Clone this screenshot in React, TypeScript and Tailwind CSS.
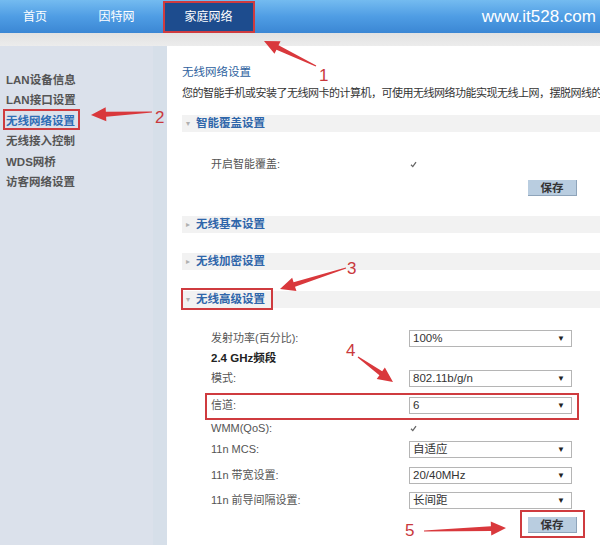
import React from "react";

const FONT = { fontFamily: '"Liberation Sans", "Noto Sans CJK SC", sans-serif' };

// red tapered arrow polygon, tail -> tip
function arrowPoints(x1: number, y1: number, x2: number, y2: number) {
  const dx = x2 - x1;
  const dy = y2 - y1;
  const len = Math.hypot(dx, dy);
  const ux = dx / len;
  const uy = dy / len;
  const nx = -uy;
  const ny = ux;
  const head = 15;
  const hw = 7;
  const bx = x2 - ux * head;
  const by = y2 - uy * head;
  const pts = [
    [x1 + nx * 0.6, y1 + ny * 0.6],
    [bx + nx * 2.4, by + ny * 2.4],
    [bx + nx * hw, by + ny * hw],
    [x2, y2],
    [bx - nx * hw, by - ny * hw],
    [bx - nx * 2.4, by - ny * 2.4],
    [x1 - nx * 0.6, y1 - ny * 0.6],
  ];
  return pts.map((p) => p.join(",")).join(" ");
}

const sideItems = ["LAN设备信息", "LAN接口设置", "无线网络设置", "无线接入控制", "WDS网桥", "访客网络设置"];

function SectionBar({ title, open }: { title: string; open?: boolean }) {
  return (
    <div className="flex h-[17px] items-center bg-[#f2f2f2] pl-[4px]">
      <span className="w-[10px] text-[8px] leading-none text-[#b0b0b0]">{open ? "▾" : "▸"}</span>
      <span className="text-[11.5px] font-bold leading-[17px] text-[#2f66aa]">{title}</span>
    </div>
  );
}

function Select({ value }: { value: string }) {
  return (
    <div className="flex h-[17px] w-[163px] items-center justify-between border border-[#b5b5b5] bg-white pl-[3px] pr-[6px]">
      <span className="text-[11.5px] leading-[15px] text-[#333]">{value}</span>
      <span className="text-[8px] leading-none text-[#222]">▼</span>
    </div>
  );
}

function Check() {
  return (
    <svg width="7" height="7" viewBox="0 0 7 7" className="ml-[1px]">
      <path d="M1 3.8 L2.8 5.6 L6 1.2" stroke="#666" strokeWidth="1.3" fill="none" />
    </svg>
  );
}

function Row({ label, children, className }: { label: string; children: React.ReactNode; className?: string }) {
  return (
    <div className={`flex h-[17px] shrink-0 items-center pl-[29px] ${className ?? ""}`}>
      <span className="w-[198px] text-[11px] leading-[17px] text-[#555]">{label}</span>
      {children}
    </div>
  );
}

function SaveButton() {
  return (
    <div className="flex h-[16px] w-[49px] items-center justify-center border-b border-r border-[#8ea4ba] bg-[#b9cde0] text-[11.5px] font-bold leading-[16px] text-[#333]">
      保存
    </div>
  );
}

export default function App() {
  return (
    <div className="relative h-[545px] w-[600px] overflow-hidden bg-white" style={FONT}>
      {/* top nav */}
      <div className="flex h-[33px] items-center bg-gradient-to-b from-[#74bbf0] via-[#4f9de4] to-[#3b87d4] shadow-[0_1px_2px_#7a8ea4]">
        <div className="w-[70px] text-center text-[12px] text-white">首页</div>
        <div className="w-[93px] text-center text-[12px] text-white">因特网</div>
        <div className="flex h-[31px] w-[91px] items-center justify-center bg-[#1d4c8e] text-[12px] text-white">家庭网络</div>
        <div className="flex-1 pr-[4px] text-right text-[17px] text-white">www.it528.com</div>
      </div>
      <div className="h-[13px] bg-gradient-to-b from-[#e2e2e2] to-[#ececec]" />

      <div className="flex h-[499px]">
        {/* sidebar */}
        <div className="flex w-[167px] bg-[#dbe1eb]">
          <div className="flex w-[153px] flex-col pl-[6px] pt-[24px]">
            {sideItems.map((t) => (
              <div
                key={t}
                className={`h-[20.4px] text-[11.5px] font-semibold leading-[20px] ${t === "无线网络设置" ? "text-[#2f6db5]" : "text-[#555]"}`}
              >
                {t}
              </div>
            ))}
          </div>
          <div className="w-[14px] bg-[#d6dfe9]" />
        </div>

        {/* main panel */}
        <div className="flex min-w-0 flex-1 flex-col overflow-hidden pl-[15px]">
          <div className="mt-[16px] h-[20px] shrink-0 text-[11.5px] leading-[20px] text-[#2d5f9e]">无线网络设置</div>
          <div className="mt-[1px] h-[20px] shrink-0 whitespace-nowrap text-[11px] leading-[20px] tracking-[-0.5px] text-[#333]">
            您的智能手机或安装了无线网卡的计算机，可使用无线网络功能实现无线上网，摆脱网线的
          </div>
          <div className="mt-[12px]">
            <SectionBar title="智能覆盖设置" open />
          </div>
          <Row label="开启智能覆盖:" className="mt-[24px]">
            <Check />
          </Row>
          <div className="mt-[7px] flex h-[16px] shrink-0 pl-[346px]">
            <SaveButton />
          </div>
          <div className="mt-[20px]">
            <SectionBar title="无线基本设置" />
          </div>
          <div className="mt-[20px]">
            <SectionBar title="无线加密设置" />
          </div>
          <div className="mt-[21px]">
            <SectionBar title="无线高级设置" open />
          </div>
          <Row label="发射功率(百分比):" className="mt-[22px]">
            <Select value="100%" />
          </Row>
          <div className="mt-[4px] h-[14px] shrink-0 pl-[29px] text-[11.5px] font-bold leading-[14px] text-[#222]">2.4 GHz频段</div>
          <Row label="模式:" className="mt-[5px]">
            <Select value="802.11b/g/n" />
          </Row>
          <Row label="信道:" className="mt-[10px]">
            <Select value="6" />
          </Row>
          <Row label="WMM(QoS):" className="mt-[6px]">
            <Check />
          </Row>
          <Row label="11n MCS:" className="mt-[4px]">
            <Select value="自适应" />
          </Row>
          <Row label="11n 带宽设置:" className="mt-[9px]">
            <Select value="20/40MHz" />
          </Row>
          <Row label="11n 前导间隔设置:" className="mt-[8px]">
            <Select value="长间距" />
          </Row>
          <div className="mt-[8px] flex h-[16px] shrink-0 pl-[346px]">
            <SaveButton />
          </div>
        </div>
      </div>

      {/* annotation overlay */}
      <div className="pointer-events-none absolute left-[163px] top-[1px] h-[32px] w-[92px] border-2 border-[#cf3b3f]" />
      <div className="pointer-events-none absolute left-[3px] top-[109px] h-[21px] w-[77px] border-2 border-[#cf3b3f]" />
      <div className="pointer-events-none absolute left-[181px] top-[288px] h-[22px] w-[92px] border-2 border-[#cf3b3f]" />
      <div className="pointer-events-none absolute left-[205px] top-[393px] h-[27px] w-[374px] border-2 border-[#cf3b3f]" />
      <div className="pointer-events-none absolute left-[520px] top-[510px] h-[28px] w-[65px] border-2 border-[#cf3b3f]" />

      <svg className="pointer-events-none absolute left-0 top-0" width="600" height="545">
        <polygon points={arrowPoints(316, 66, 264, 41)} fill="#d9383c" />
        <polygon points={arrowPoints(152, 112, 91, 115)} fill="#d9383c" />
        <polygon points={arrowPoints(346, 268, 280, 289)} fill="#d9383c" />
        <polygon points={arrowPoints(358, 357, 393, 382)} fill="#d9383c" />
        <polygon points={arrowPoints(424, 531, 506, 528)} fill="#d9383c" />
      </svg>
      <span className="absolute left-[319px] top-[63px] text-[17px] text-[#c9383c]">1</span>
      <span className="absolute left-[155px] top-[105px] text-[17px] text-[#c9383c]">2</span>
      <span className="absolute left-[347px] top-[256px] text-[17px] text-[#c9383c]">3</span>
      <span className="absolute left-[346px] top-[338px] text-[17px] text-[#c9383c]">4</span>
      <span className="absolute left-[405px] top-[518px] text-[17px] text-[#c9383c]">5</span>
    </div>
  );
}
